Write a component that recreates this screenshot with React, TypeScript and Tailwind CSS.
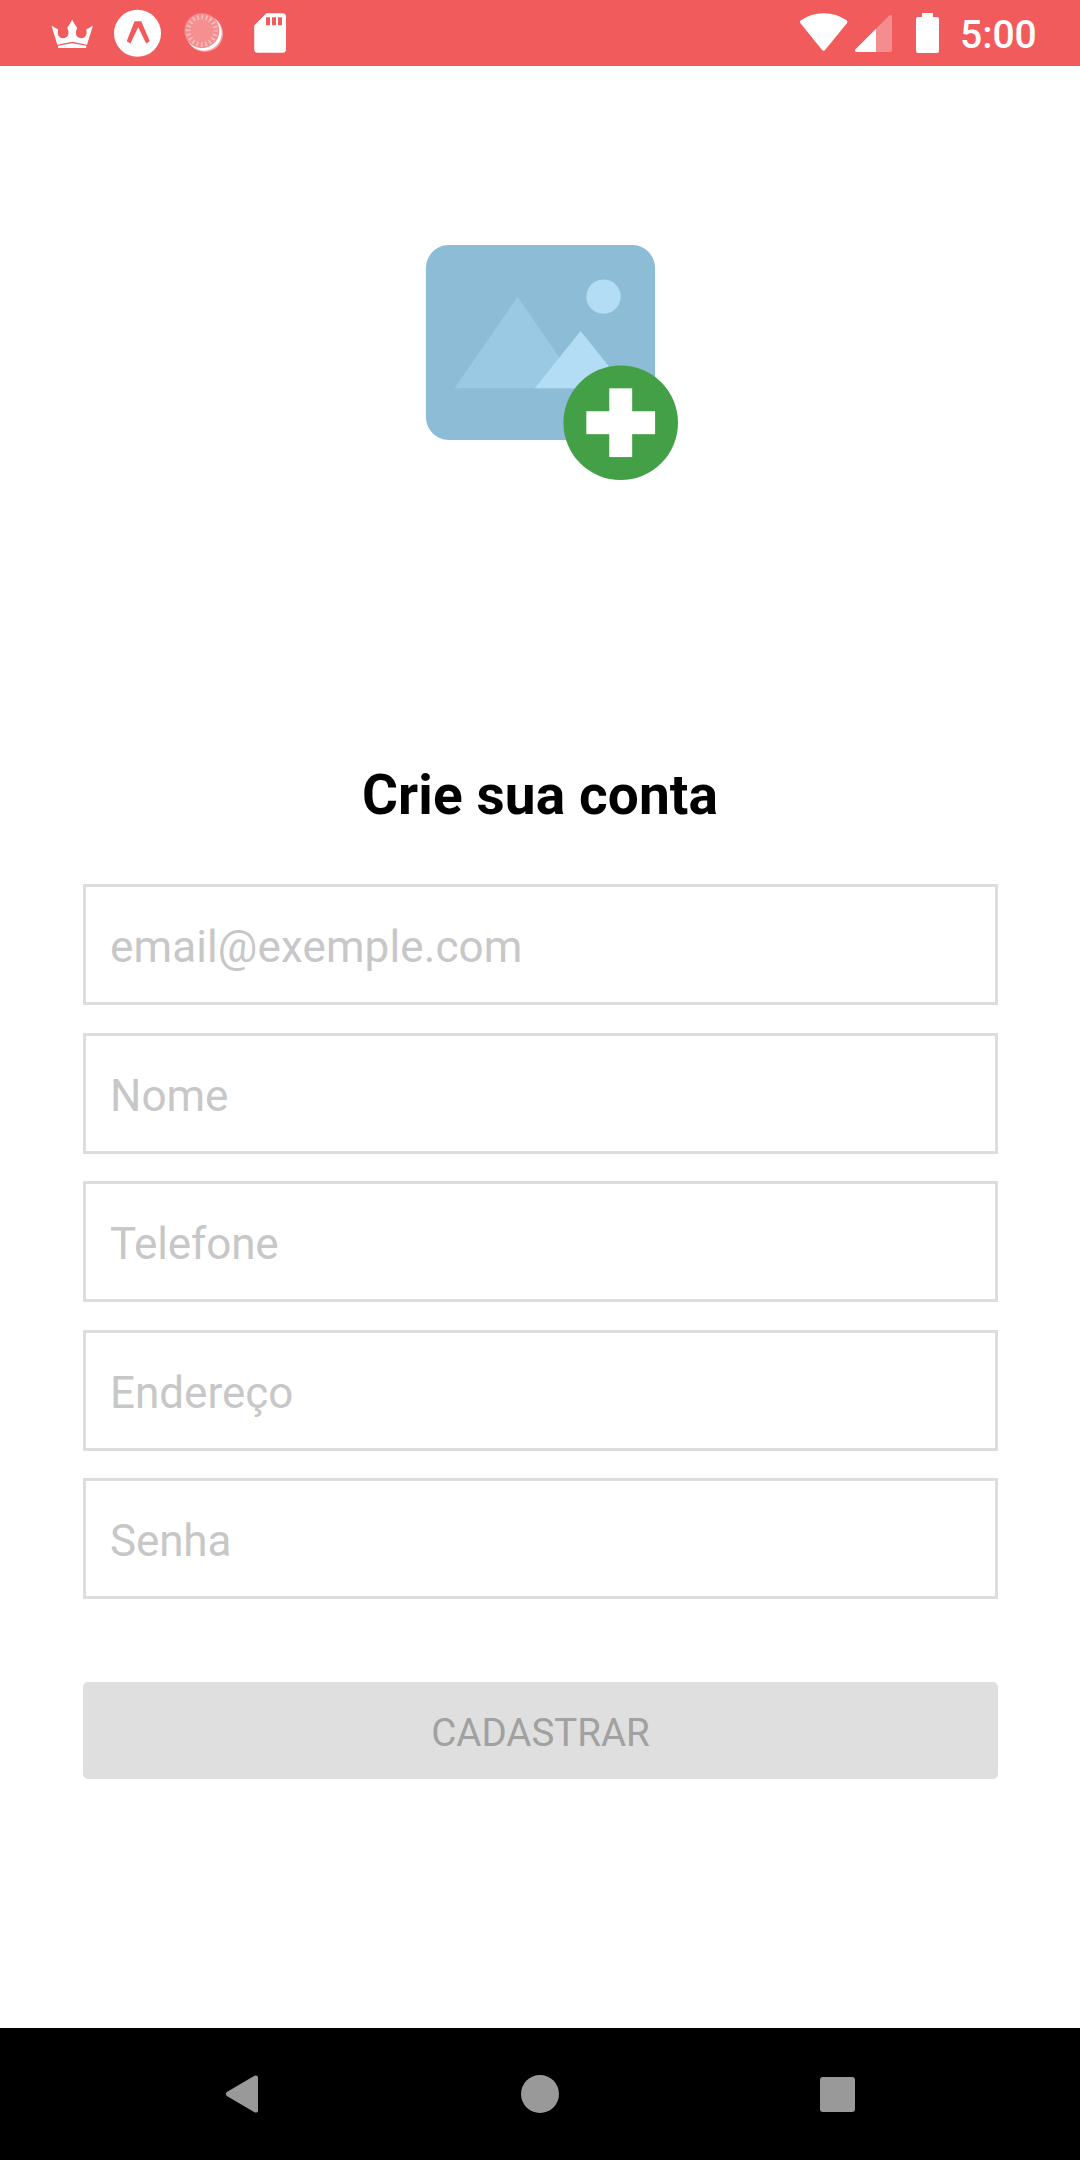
import { FcAddImage } from "react-icons/fc";

const fields = [
  { label: "email@exemple.com", type: "email", style: "mb-[28px] tracking-[0.12px]" },
  { label: "Nome", type: "text", style: "mb-[27px]" },
  { label: "Telefone", type: "tel", style: "mb-[28px] tracking-[-0.12px]" },
  { label: "Endereço", type: "text", style: "mb-[27px]" },
  { label: "Senha", type: "password", style: "tracking-[-0.15px]" },
];

function CrownIcon() {
  return (
    <svg className="ml-[51px] h-[66px] w-[42px]" viewBox="51 0 42 66" fill="#fff">
      <path d="M51.500 25.800 L58.200 29.600 C57 34 58.500 38.300 63 38.300 C68 38.300 70 33.500 67.400 28.600 C66.800 27.500 70.200 24.500 72.200 19.600 C74.200 24.500 77.600 27.500 77 28.600 C74.400 33.500 76.400 38.300 81.400 38.300 C85.900 38.300 87.400 34 86.200 29.600 L92.900 25.800 L87 44.800 L72.200 41.700 L57.300 44.800 Z" />
      <path d="M58.200 45.700 L72.200 43.200 L86.200 45.700 V47.900 H58.200 Z" />
    </svg>
  );
}

function ExpoIcon() {
  return (
    <svg className="ml-[21px] h-[66px] w-[47px]" viewBox="114 0 47 66">
      <circle cx="137.5" cy="33.300" r="23.500" fill="#fff" />
      <path
        d="M134.500 21.300 H141.300 L149.800 41.300 L146.200 43.600 L138.200 27.300 L130.400 43.600 L126.700 41.300 Z"
        fill="#f15b5c"
      />
    </svg>
  );
}

function SyncIcon() {
  return (
    <svg className="ml-[22px] h-[66px] w-[42px]" viewBox="183 0 42 66">
      <circle cx="204.800" cy="33.700" r="18.300" fill="#f69c9c" />
      <circle cx="203.900" cy="32.900" r="17.800" fill="#fff" />
      <circle cx="201.900" cy="30.700" r="17.500" fill="#f58f8f" />
      <circle
        cx="201.900"
        cy="30.700"
        r="13.700"
        fill="none"
        stroke="#f9bebe"
        strokeWidth="5"
        strokeDasharray="1.600 2.704"
        strokeDashoffset="0.8"
      />
      <circle cx="201.900" cy="30.700" r="11.200" fill="#f59090" />
    </svg>
  );
}

function SdCardIcon() {
  return (
    <svg className="ml-[29px] h-[66px] w-[32px]" viewBox="254 0 32 66">
      <path
        d="M266.300 13.300 H282.500 Q286 13.300 286 16.800 V49.200 Q286 52.700 282.500 52.700 H257.700 Q254.200 52.700 254.200 49.200 V25.400 Z"
        fill="#fff"
      />
      <path d="M266 17.300h4v8h-4z M272 17.300h4v8h-4z M278 17.300h4v8h-4z" fill="#f15b5c" />
    </svg>
  );
}

function WifiIcon() {
  return (
    <svg className="h-[66px] w-[48px]" viewBox="800 0 48 66" fill="#fff">
      <path d="M800.500 20.500 Q811 13.200 823.700 13.200 Q836.500 13.200 846.900 20.500 Q847.800 21.800 846.900 23.300 L825.300 49.800 Q823.600 51.700 821.900 49.800 L800.500 23.300 Q799.500 21.800 800.500 20.500 Z" />
    </svg>
  );
}

function SignalIcon() {
  return (
    <svg className="ml-[7px] h-[66px] w-[37px]" viewBox="855 0 37 66">
      <path
        d="M876 28.700 L889.300 15.400 Q892 13.600 892 17 V50 Q892 52 890 52 H876 Z"
        fill="#f58c8d"
      />
      <path d="M876 28.700 V52 H856.500 Q854 51.500 855.500 49.200 Z" fill="#fff" />
    </svg>
  );
}

function BatteryIcon() {
  return (
    <svg className="ml-[24px] h-[66px] w-[23px]" viewBox="916 0 23 66" fill="#fff">
      <path d="M922 13 H933 V17 H937 Q939 17 939 19 V51 Q939 53 937 53 H918 Q916 53 916 51 V19 Q916 17 918 17 H922 Z" />
    </svg>
  );
}

function StatusBar() {
  return (
    <header className="flex h-[66px] shrink-0 bg-[#f15b5c]">
      <CrownIcon />
      <ExpoIcon />
      <SyncIcon />
      <SdCardIcon />
      <div className="ml-auto flex w-[280px]">
        <WifiIcon />
        <SignalIcon />
        <BatteryIcon />
        <span className="ml-[21px] pt-[2px] text-[39px] leading-[66px] font-medium text-white">5:00</span>
      </div>
    </header>
  );
}

function NavBar() {
  return (
    <nav className="flex h-[132px] shrink-0 items-center bg-black pl-[225px]">
      <svg className="h-[40px] w-[34px]" viewBox="0 0 34 40" fill="#999">
        <path d="M1.800 18.100 L29.500 1.700 Q33 0.600 33 3.600 V36.400 Q33 39.400 29.500 38.300 L1.800 21.900 Q0 20 1.800 18.100 Z" />
      </svg>
      <span className="ml-[262px] size-[38px] rounded-full bg-[#999]" />
      <span className="ml-[261px] size-[35px] rounded-[3px] bg-[#999]" />
    </nav>
  );
}

export default function App() {
  return (
    <div className="flex h-[2160px] w-[1080px] flex-col bg-white font-['Roboto',sans-serif]">
      <StatusBar />
      <main className="flex flex-1 flex-col px-[83px] pt-[139px]">
        <FcAddImage className="ml-[320px] size-[275px] shrink-0" />
        <h1 className="mt-[283px] h-[65px] text-center text-[55px] leading-[65px] font-bold tracking-[0.1px] text-black">
          Crie sua conta
        </h1>
        <form className="mt-[56px] flex w-[915px] flex-col">
          {fields.map((field) => (
            <input
              key={field.label}
              type={field.type}
              placeholder={field.label}
              aria-label={field.label}
              className={
                "h-[121px] w-full border-[3px] border-[#dddddd] bg-white px-[24px] pt-[4px] text-[44px] text-black outline-none placeholder:text-[#c7c7c7] " +
                field.style
              }
            />
          ))}
          <button
            type="button"
            disabled
            className="mt-[83px] h-[97px] rounded-[5px] bg-[#dfdfdf] pt-[4px] text-[38.500px] text-[#a1a1a1]"
          >
            CADASTRAR
          </button>
        </form>
      </main>
      <NavBar />
    </div>
  );
}
